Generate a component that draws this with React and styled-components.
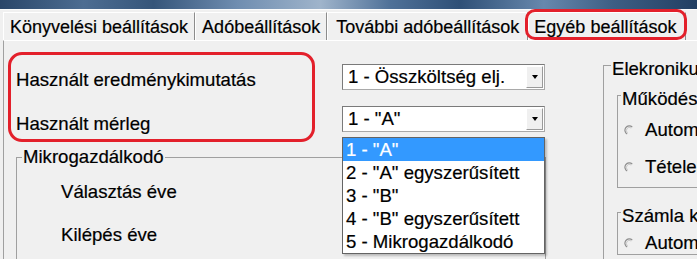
import React from 'react';
import styled, { createGlobalStyle, css } from 'styled-components';

const GlobalStyle = createGlobalStyle`
  body {
    margin: 0;
    background: #f0f0f0;
    overflow: hidden;
  }
  * { box-sizing: border-box; }
`;

const Window = styled.div`
  width: 697px;
  height: 259px;
  overflow: hidden;
  display: flex;
  flex-direction: column;
  background: #f0f0f0;
  color: #000;
  font-family: "Liberation Sans", Arial, sans-serif;
  font-size: 18.6px;
  -webkit-text-stroke: 0.2px #000;
`;

const TitleStrip = styled.div`
  height: 10px;
  flex: none;
  border-bottom: 1px solid #fbfbfb;
  background: linear-gradient(90deg,
    #2a4669 0%, #4d6d92 12%, #35557a 22%, #6f8db0 34%,
    #9fb4cb 46%, #4f7198 56%, #2f5077 66%, #6788ad 78%,
    #3d5e84 88%, #223f63 100%);
`;

const TabBar = styled.div`
  height: 30px;
  flex: none;
  display: flex;
  align-items: flex-end;
  padding-left: 3px;
  font-size: 18px;
`;

const Tab = styled.div`
  position: relative;
  height: 28px;
  line-height: 28px;
  padding: ${p => p.$pad || '0 6px'};
  white-space: nowrap;
  border-top: 1px solid #fff;
  border-left: 1px solid #fff;
  border-right: 1px solid #8c8c8c;

  ${p => p.$marked && css`
    &::after {
      content: '';
      position: absolute;
      left: -4px;
      right: -2px;
      top: -4px;
      bottom: 0;
      border: 3px solid #e3202b;
      border-radius: 10px;
    }
  `}
`;

const Panel = styled.div`
  flex: 1;
  margin-left: 3px;
  border-left: 1px solid #a0a0a0;
  border-top: 1px solid #fff;
  display: grid;
  grid-template-columns: 599px 1fr;
  align-items: start;
`;

const LeftCol = styled.div`
  display: flex;
  flex-direction: column;
`;

const TopRow = styled.div`
  display: flex;
  align-items: flex-start;
  margin: 11px 0 0 4px;
`;

const MarkedLabels = styled.div`
  width: 307px;
  height: 90px;
  border: 3px solid #e3202b;
  border-radius: 14px;
  padding: 14px 0 0 5px;
  display: flex;
  flex-direction: column;
  gap: 22px;
`;

const FieldLabel = styled.div`
  line-height: 22px;
  white-space: nowrap;
`;

const ComboColumn = styled.div`
  position: relative;
  margin: 12px 0 0 27px;
  display: flex;
  flex-direction: column;
  gap: 16px;
`;

const Combo = styled.div`
  width: 203px;
  height: 26px;
  display: flex;
  align-items: center;
  background: #fff;
  border: 1px solid #7a7a7a;
  border-right-color: #a9a9a9;
  border-bottom-color: #a9a9a9;
`;

const ComboText = styled.span`
  flex: 1;
  padding-left: 5px;
  white-space: nowrap;
`;

const ComboButton = styled.span`
  width: 17px;
  height: 22px;
  margin-right: 1px;
  display: flex;
  align-items: center;
  justify-content: center;
  background: #f0f0f0;
  border: 1px solid;
  border-color: #fff #9a9a9a #9a9a9a #fff;

  &::before {
    content: '';
    border-left: 3.5px solid transparent;
    border-right: 3.5px solid transparent;
    border-top: 4px solid #000;
  }
`;

const DropList = styled.div`
  position: absolute;
  top: 73px;
  left: 0;
  width: 203px;
  z-index: 5;
  background: #fff;
  border: 1px solid #646464;
  box-shadow: 2px 2px 2px rgba(0, 0, 0, 0.22);
`;

const ListItem = styled.div`
  height: 23px;
  line-height: 23px;
  padding-left: 3px;
  white-space: nowrap;
  background: ${p => (p.$active ? '#3399ff' : 'transparent')};
  color: ${p => (p.$active ? '#fff' : '#000')};
  -webkit-text-stroke-color: ${p => (p.$active ? '#fff' : '#000')};
`;

const GroupBox = styled.fieldset`
  margin: ${p => p.$margin || '0'};
  padding: 0;
  min-width: 0;
  width: ${p => p.$width || '320px'};
  border: 1px solid #a0a0a0;
  ${p => p.$tall && css`height: 220px;`}
`;

const Legend = styled.legend`
  margin-left: ${p => p.$indent}px;
  padding: ${p => (p.$low ? '8px 1px 0' : '0 1px')};
  line-height: 22px;
  white-space: nowrap;
`;

const GroupBody = styled.div`
  display: flex;
  flex-direction: column;
  padding: ${p => p.$pad};
  gap: ${p => p.$gap || 0}px;
`;

const RadioRow = styled.div`
  display: flex;
  align-items: center;
  line-height: 22px;
  white-space: nowrap;

  svg {
    flex: none;
    margin-right: 11px;
  }
`;

const RightCol = styled.div`
  margin-top: 9px;
`;

function RadioMark() {
  return (
    <svg width="10" height="10" viewBox="0 0 10 10">
      <path d="M8.3 2.2 A4.3 4.3 0 1 0 3.2 9.0" fill="none" stroke="#8e8e8e" strokeWidth="1.2" />
      <path d="M7.2 3.0 A3 3 0 1 0 3.6 7.8" fill="none" stroke="#c9c9c9" strokeWidth="1" />
    </svg>
  );
}

const balanceItems = [
  '1 - "A"',
  '2 - "A" egyszerűsített',
  '3 - "B"',
  '4 - "B" egyszerűsített',
  '5 - Mikrogazdálkodó',
];

export default function App() {
  return (
    <Window>
      <GlobalStyle />
      <TitleStrip />
      <TabBar>
        <Tab>Könyvelési beállítások</Tab>
        <Tab>Adóbeállítások</Tab>
        <Tab $pad="0 8px">További adóbeállítások</Tab>
        <Tab $pad="0 9px 0 5px" $marked>Egyéb beállítások</Tab>
      </TabBar>
      <Panel>
        <LeftCol>
          <TopRow>
            <MarkedLabels>
              <FieldLabel>Használt eredménykimutatás</FieldLabel>
              <FieldLabel>Használt mérleg</FieldLabel>
            </MarkedLabels>
            <ComboColumn>
              <Combo>
                <ComboText>1 - Összköltség elj.</ComboText>
                <ComboButton />
              </Combo>
              <Combo>
                <ComboText>1 - "A"</ComboText>
                <ComboButton />
              </Combo>
              <DropList>
                {balanceItems.map((item, i) => (
                  <ListItem key={item} $active={i === 0}>{item}</ListItem>
                ))}
              </DropList>
            </ComboColumn>
          </TopRow>
          <GroupBox $margin="4px 0 0 12px" $width="530px" $tall>
            <Legend $indent={5}>Mikrogazdálkodó</Legend>
            <GroupBody $pad="13px 0 0 44px" $gap={21}>
              <FieldLabel>Választás éve</FieldLabel>
              <FieldLabel>Kilépés éve</FieldLabel>
            </GroupBody>
          </GroupBox>
        </LeftCol>

        <RightCol>
          <GroupBox $tall>
            <Legend $indent={7} $low>Elekronikus számla</Legend>
            <GroupBody $pad="0 0 0 13px">
              <GroupBox>
                <Legend $indent={3} $low>Működési mód</Legend>
                <GroupBody $pad="9px 0 9px 6px" $gap={15}>
                  <RadioRow><RadioMark />Automatikus</RadioRow>
                  <RadioRow><RadioMark />Tételes</RadioRow>
                </GroupBody>
              </GroupBox>
              <GroupBox $margin="9px 0 0 0">
                <Legend $indent={3} $low>Számla kiállítás</Legend>
                <GroupBody $pad="5px 0 0 6px">
                  <RadioRow><RadioMark />Automatikus</RadioRow>
                </GroupBody>
              </GroupBox>
            </GroupBody>
          </GroupBox>
        </RightCol>
      </Panel>
    </Window>
  );
}
